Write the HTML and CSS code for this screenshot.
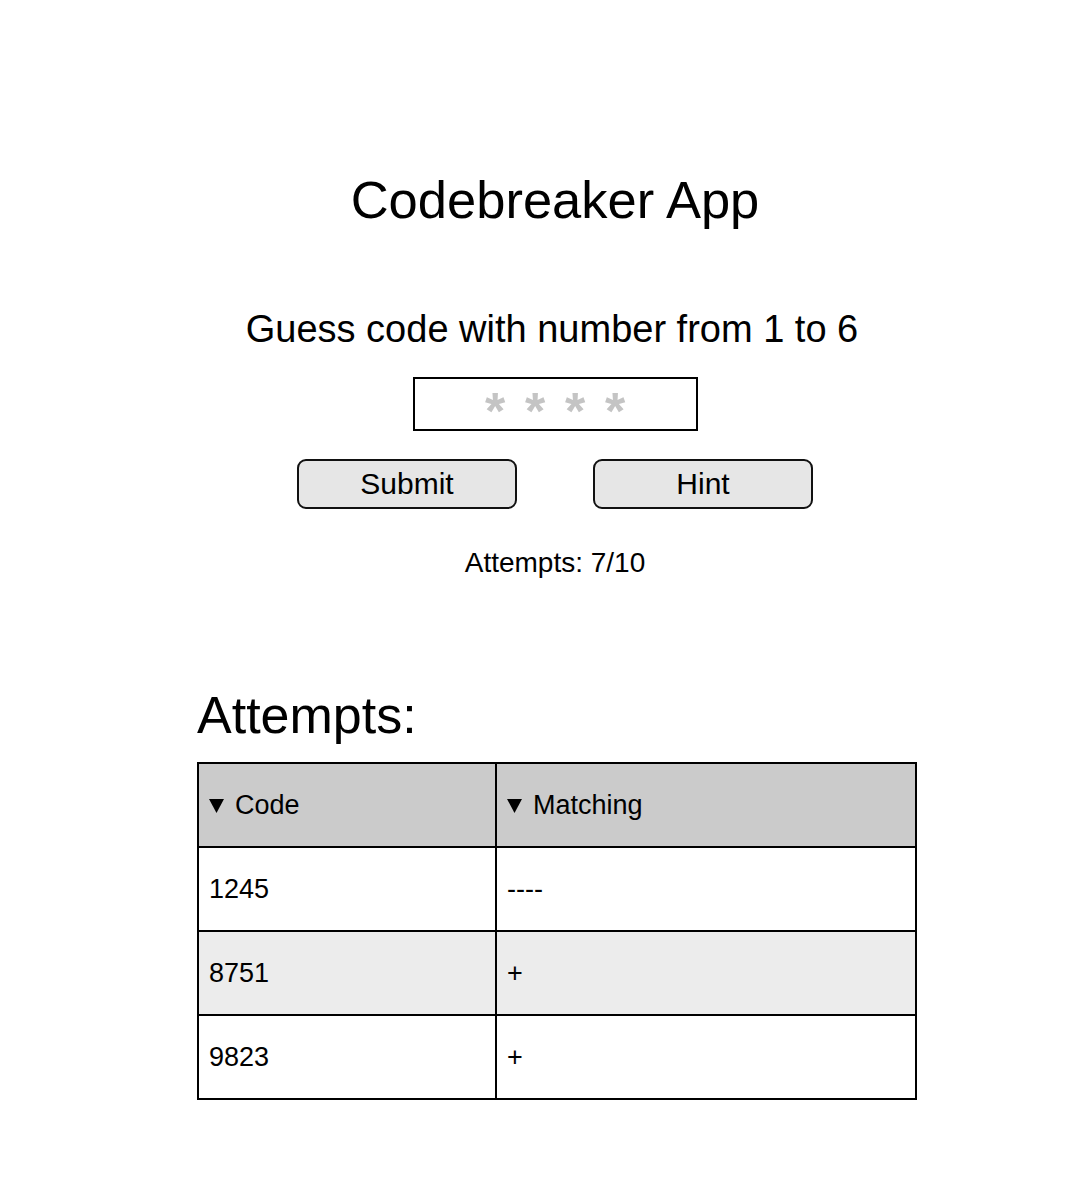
FILE: index.html
```html
<!DOCTYPE html>
<html>
<head>
<meta charset="utf-8">
<link rel="stylesheet" href="styles.css">
</head>
<body>
<div class="app">
  <h1 class="title">Codebreaker App</h1>
  <p class="subtitle">Guess code with number from 1 to 6</p>
  <div class="code-input">
    <span class="star">*</span><span class="star">*</span><span class="star">*</span><span class="star">*</span>
  </div>
  <div class="buttons">
    <button class="btn">Submit</button>
    <button class="btn">Hint</button>
  </div>
  <p class="counter">Attempts: 7/10</p>
  <section class="history">
    <h2 class="history-title">Attempts:</h2>
    <table class="attempts">
      <thead>
        <tr>
          <th class="col-code"><span class="sort"><svg class="tri" viewBox="0 0 15 15" width="15" height="15"><polygon points="0,1 15,1 7.5,15" fill="#000"/></svg>Code</span></th>
          <th><span class="sort"><svg class="tri" viewBox="0 0 15 15" width="15" height="15"><polygon points="0,1 15,1 7.5,15" fill="#000"/></svg>Matching</span></th>
        </tr>
      </thead>
      <tbody>
        <tr><td>1245</td><td>----</td></tr>
        <tr class="alt"><td>8751</td><td>+</td></tr>
        <tr><td>9823</td><td>+</td></tr>
      </tbody>
    </table>
  </section>
</div>
</body>
</html>
```

FILE: styles.css
```css
html, body {
  margin: 0;
  padding: 0;
  background: #fff;
}
body {
  font-family: "Liberation Sans", Arial, sans-serif;
  color: #000;
}
.app {
  display: flex;
  flex-direction: column;
  align-items: center;
  padding: 170px 0 0 18px;
}
.title {
  margin: 0;
  font-size: 52.5px;
  line-height: 60px;
  font-weight: normal;
}
.subtitle {
  margin: 77px 6px 0 0;
  font-size: 38px;
  line-height: 44px;
}
.code-input {
  margin-top: 26px;
  width: 281px;
  height: 50px;
  border: 2px solid #000;
  display: flex;
  justify-content: center;
  align-items: flex-start;
}
.star {
  width: 40px;
  text-align: center;
  color: #c4c4c4;
  font-weight: bold;
  font-size: 52px;
  line-height: 36px;
  padding-top: 14px;
}
.buttons {
  margin-top: 28px;
  display: flex;
  gap: 76px;
}
.btn {
  width: 220px;
  height: 50px;
  border: 2px solid #111;
  border-radius: 9px;
  background: #e6e6e6;
  font-family: "Liberation Sans", Arial, sans-serif;
  font-size: 30px;
  color: #000;
  padding: 0;
}
.counter {
  margin: 38px 0 0;
  font-size: 28px;
  line-height: 32px;
}
.history {
  margin: 106px 0 0 4px;
  width: 720px;
}
.history-title {
  margin: 0;
  font-size: 52px;
  line-height: 60px;
  font-weight: normal;
}
.attempts {
  margin-top: 17px;
  width: 720px;
  border-collapse: collapse;
  border: 2px solid #000;
  font-size: 27px;
}
.attempts th,
.attempts td {
  border: 2px solid #000;
  height: 82px;
  padding: 0 10px;
  text-align: left;
  font-weight: normal;
  vertical-align: middle;
}
.attempts th {
  background: #cbcbcb;
}
.col-code {
  width: 276px;
}
.attempts tr.alt td {
  background: #ececec;
}
.sort {
  display: inline-flex;
  align-items: center;
  gap: 11px;
}
.tri {
  display: block;
}
```
